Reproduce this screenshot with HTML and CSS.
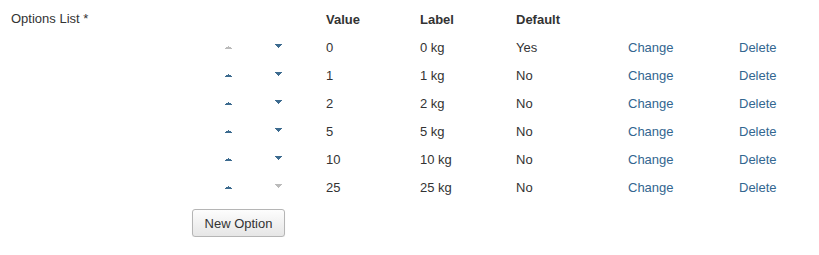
FILE: index.html
```html
<!DOCTYPE html>
<html lang="en">

<head>
    <meta charset="UTF-8">
    <title>Options List</title>
    <link rel="stylesheet" href="styles.css">
</head>

<body>
    <div class="field">
        <div class="field-label">Options List *</div>
        <div class="options">
            <div class="cell"></div>
            <div class="cell"></div>
            <div class="cell head">Value</div>
            <div class="cell head">Label</div>
            <div class="cell head">Default</div>
            <div class="cell"></div>
            <div class="cell"></div>

            <div class="cell"><svg class="arrow up off" viewBox="0 0 9 5"><path d="M4 1h1v1h2v1h1v1H1V3h1V2h2z"/></svg></div>
            <div class="cell"><svg class="arrow down" viewBox="0 0 9 5"><path d="M1 1h7v1H7v1H6v1H5v1H4V4H3V3H2V2H1z"/></svg></div>
            <div class="cell">0</div>
            <div class="cell">0 kg</div>
            <div class="cell">Yes</div>
            <div class="cell"><a href="">Change</a></div>
            <div class="cell"><a href="">Delete</a></div>

            <div class="cell"><svg class="arrow up" viewBox="0 0 9 5"><path d="M4 1h1v1h2v1h1v1H1V3h1V2h2z"/></svg></div>
            <div class="cell"><svg class="arrow down" viewBox="0 0 9 5"><path d="M1 1h7v1H7v1H6v1H5v1H4V4H3V3H2V2H1z"/></svg></div>
            <div class="cell">1</div>
            <div class="cell">1 kg</div>
            <div class="cell">No</div>
            <div class="cell"><a href="">Change</a></div>
            <div class="cell"><a href="">Delete</a></div>

            <div class="cell"><svg class="arrow up" viewBox="0 0 9 5"><path d="M4 1h1v1h2v1h1v1H1V3h1V2h2z"/></svg></div>
            <div class="cell"><svg class="arrow down" viewBox="0 0 9 5"><path d="M1 1h7v1H7v1H6v1H5v1H4V4H3V3H2V2H1z"/></svg></div>
            <div class="cell">2</div>
            <div class="cell">2 kg</div>
            <div class="cell">No</div>
            <div class="cell"><a href="">Change</a></div>
            <div class="cell"><a href="">Delete</a></div>

            <div class="cell"><svg class="arrow up" viewBox="0 0 9 5"><path d="M4 1h1v1h2v1h1v1H1V3h1V2h2z"/></svg></div>
            <div class="cell"><svg class="arrow down" viewBox="0 0 9 5"><path d="M1 1h7v1H7v1H6v1H5v1H4V4H3V3H2V2H1z"/></svg></div>
            <div class="cell">5</div>
            <div class="cell">5 kg</div>
            <div class="cell">No</div>
            <div class="cell"><a href="">Change</a></div>
            <div class="cell"><a href="">Delete</a></div>

            <div class="cell"><svg class="arrow up" viewBox="0 0 9 5"><path d="M4 1h1v1h2v1h1v1H1V3h1V2h2z"/></svg></div>
            <div class="cell"><svg class="arrow down" viewBox="0 0 9 5"><path d="M1 1h7v1H7v1H6v1H5v1H4V4H3V3H2V2H1z"/></svg></div>
            <div class="cell">10</div>
            <div class="cell">10 kg</div>
            <div class="cell">No</div>
            <div class="cell"><a href="">Change</a></div>
            <div class="cell"><a href="">Delete</a></div>

            <div class="cell"><svg class="arrow up" viewBox="0 0 9 5"><path d="M4 1h1v1h2v1h1v1H1V3h1V2h2z"/></svg></div>
            <div class="cell"><svg class="arrow down off" viewBox="0 0 9 5"><path d="M1 1h7v1H7v1H6v1H5v1H4V4H3V3H2V2H1z"/></svg></div>
            <div class="cell">25</div>
            <div class="cell">25 kg</div>
            <div class="cell">No</div>
            <div class="cell"><a href="">Change</a></div>
            <div class="cell"><a href="">Delete</a></div>
        </div>
    </div>
    <div class="actions">
        <button class="btn">New Option</button>
    </div>
</body>

</html>
```

FILE: styles.css
```css
* {
    margin: 0;
    padding: 0;
    box-sizing: border-box;
}

body {
    font-family: "Liberation Sans", Arial, sans-serif;
    font-size: 13px;
    color: #333;
    background: #fff;
}

.field {
    display: flex;
    padding-top: 5px;
}

.field-label {
    width: 224px;
    padding-left: 11px;
    line-height: 28px;
}

.options {
    display: grid;
    grid-template-columns: 50px 52px 94px 96px 112px 111px 70px;
    grid-auto-rows: 28px;
}

.cell {
    display: flex;
    align-items: center;
    white-space: nowrap;
}

.head {
    font-weight: bold;
}

a {
    text-decoration: none;
    color: #336690;
}

.arrow {
    width: 9px;
    height: 5px;
    fill: #3d6b8f;
}

.arrow.up {
    margin-top: 0;
}

.arrow.down {
    margin-top: -4px;
}

.arrow.off {
    fill: #bbb;
}

.actions {
    padding: 8px 0 0 192px;
}

.btn {
    width: 93px;
    height: 28px;
    font-family: "Liberation Sans", Arial, sans-serif;
    font-size: 13px;
    color: #333;
    border: 1px solid #b5b5b5;
    border-radius: 3px;
    background: linear-gradient(#fdfdfd, #e6e6e6);
    box-shadow: 0 1px 1px rgba(0, 0, 0, 0.08);
}
```
